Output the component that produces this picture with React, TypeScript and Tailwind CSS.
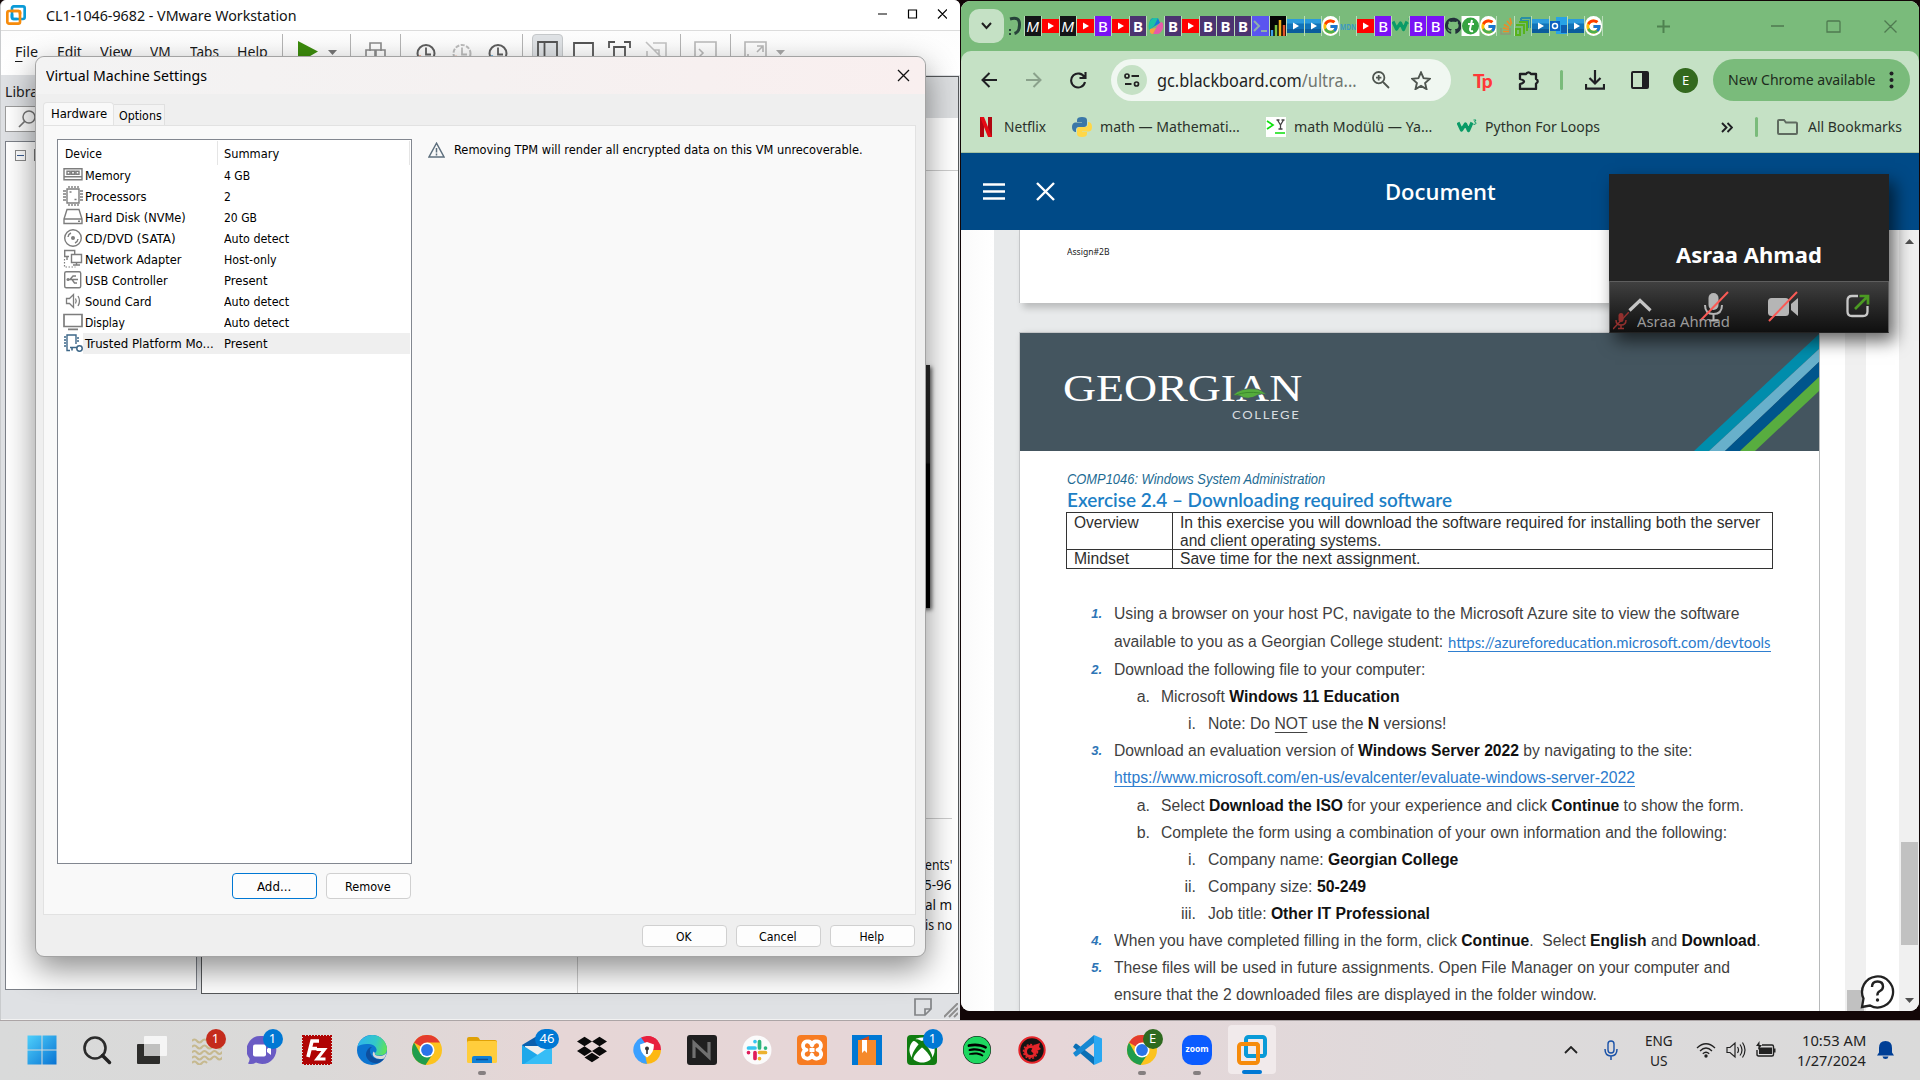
import React, { useLayoutEffect, useRef, useState } from "react";
import { FaDropbox, FaXbox, FaSpotify, FaGithub } from "react-icons/fa";
import { FcGoogle } from "react-icons/fc";
import { SiXampp } from "react-icons/si";

type Kids = { children?: React.ReactNode };

/** Text squeezed horizontally to an exact width. */
function Fit({ w, c = "", children }: { w: number; c?: string } & Kids) {
  const ref = useRef<HTMLSpanElement>(null);
  const [s, setS] = useState(1);
  useLayoutEffect(() => {
    if (ref.current) setS(w / ref.current.offsetWidth);
  }, [w]);
  return (
    <span className={"block shrink-0 " + c} style={{ width: w }}>
      <span ref={ref} className="inline-block origin-left whitespace-pre" style={{ transform: `scaleX(${s})` }}>
        {children}
      </span>
    </span>
  );
}

function Svg({ w, h, vb, c = "", children }: { w: number; h: number; vb?: string; c?: string } & Kids) {
  return (
    <svg width={w} height={h} viewBox={vb ?? `0 0 ${w} ${h}`} className={"block shrink-0 " + c} fill="none">
      {children}
    </svg>
  );
}

const VmLogo = ({ s, c = "" }: { s: number; c?: string }) => (
  <Svg w={s} h={s} vb="0 0 30 30" c={c}>
    <rect x="9" y="2" width="19" height="19" rx="2.5" stroke="#0a9ad7" strokeWidth="4" />
    <rect x="2" y="9" width="19" height="19" rx="2.5" stroke="#f68b0b" strokeWidth="4" />
    <path d="M9 14v4.500a2.500 2.500 0 0 0 2.500 2.500h5.500" stroke="#0a9ad7" strokeWidth="4" />
    <path d="M7 9h12a2 2 0 0 1 2 2v3" stroke="#f68b0b" strokeWidth="4" />
  </Svg>
);

/* ---------------- VMware window ---------------- */

const Sep = ({ c }: { c: string }) => <span className={"h-9 w-px shrink-0 bg-[#b5b5b5] " + c} />;

const Clock = ({ faded = false, accent }: { faded?: boolean; accent: string }) => (
  <Svg w={20} h={22} c={faded ? "opacity-40" : ""}>
    <circle cx="10" cy="10.500" r="8.500" stroke="#5f5f5f" strokeWidth="2" strokeDasharray={faded ? "4 1.5" : undefined} />
    <path d="M10 4.500v7h5" stroke="#5f5f5f" strokeWidth="1.800" />
    <path d="M0 15l4-3 4 3v6H0z" fill={accent} />
  </Svg>
);

function VmToolbar() {
  return (
    <div className="flex h-[44px] items-start bg-gradient-to-b from-[#fdfdfd] to-white pl-[14px] font-['Noto_Sans'] text-[15px] text-[#1a1a1a]">
      <div className="flex h-[40px] items-center">
        <Fit w={23}><u className="underline-offset-4">F</u>ile</Fit>
        <Fit w={25} c="ml-[19px]">Edit</Fit>
        <Fit w={32} c="ml-[18px]">View</Fit>
        <Fit w={21} c="ml-[18px]">VM</Fit>
        <Fit w={29} c="ml-[19px]">Tabs</Fit>
        <Fit w={31} c="ml-[18px]">Help</Fit>
      </div>
      <div className="flex h-[42px] items-center">
        <Sep c="ml-[14px]" />
        <Svg w={20} h={22} c="ml-[15px]"><path d="M0 0v22L20 10.500z" fill="#3c8c0c" /></Svg>
        <Svg w={9} h={5} c="ml-[10px]"><path d="M0 0h9L4.500 5z" fill="#777" /></Svg>
        <Sep c="ml-[13px]" />
        <Svg w={21} h={20} c="ml-[14px]">
          <path d="M5 9V1h11v8M1 16V8h9v8M11 16V8h9v8M1 16h19" stroke="#8b8b8b" strokeWidth="1.600" />
        </Svg>
        <Sep c="ml-[14px]" />
        <div className="ml-[15px] mt-[4px]"><Clock accent="#e8805a" /></div>
        <div className="ml-4 mt-[4px]"><Clock faded accent="#e8805a" /></div>
        <div className="ml-4 mt-[4px]"><Clock accent="#2e8fd0" /></div>
        <Sep c="ml-[14px]" />
        <div className="ml-[9px] flex h-[36px] w-[31px] justify-center rounded border border-[#c6c9cb] bg-[#e0e3e6] pt-[6px]">
          <Svg w={21} h={20}><path d="M1 1h19v18H1zM7.500 1v18" stroke="#555" strokeWidth="1.800" /></Svg>
        </div>
        <Svg w={21} h={20} c="ml-[10px]"><path d="M1 1h19v14H1z" stroke="#555" strokeWidth="1.800" /></Svg>
        <Svg w={23} h={22} c="ml-[14px]">
          <path d="M1 7V1h6M16 1h6v6M6 22V6h11v16" stroke="#555" strokeWidth="1.800" />
        </Svg>
        <Svg w={22} h={22} c="ml-[14px]"><path d="M1 1l19 19M8 2h13v18M2 10v10M9 9h5v5" stroke="#c4c4c4" strokeWidth="1.600" /></Svg>
        <Sep c="ml-[13px]" />
        <Svg w={23} h={22} c="ml-[13px]"><path d="M1 1h21v20H1zM5 8l4 4-4 4M12 16h6" stroke="#b9b9b9" strokeWidth="1.600" /></Svg>
        <Sep c="ml-[13px]" />
        <Svg w={23} h={22} c="ml-[13px]"><path d="M1 1h21v20H1zM13 5h6v6M19 5l-6 6M4 13v4" stroke="#b9b9b9" strokeWidth="1.600" /></Svg>
        <Svg w={9} h={5} c="ml-[9px]"><path d="M0 0h9L4.500 5z" fill="#aaa" /></Svg>
      </div>
    </div>
  );
}

function VmWindow() {
  return (
    <div className="absolute left-0 top-0 flex h-[1020px] w-[960px] flex-col overflow-hidden rounded-t-md border-l border-[#c9cbcd] bg-[#dfe1e4]">
      <div className="flex h-[31px] shrink-0 items-center border-b border-[#dcdcdc] bg-white pl-[5px]">
        <VmLogo s={20} />
        <Fit w={251} c="ml-[20px] font-['Noto_Sans'] text-[15px] text-[#111]">CL1-1046-9682 - VMware Workstation</Fit>
        <Svg w={69} h={11} c="mb-px ml-[581px]">
          <path d="M0 5h9M30.500 1h8v8h-8zM60 .5l9 9M69 .5l-9 9" stroke="#000" strokeWidth="1.200" />
        </Svg>
      </div>
      <VmToolbar />
      <div className="flex flex-1">
        <div className="flex w-[196px] flex-col pl-1">
          <div className="flex h-[31px] items-center pt-[2px] font-['Noto_Sans'] text-[15px] text-[#222]"><Fit w={46}>Library</Fit></div>
          <div className="flex h-[26px] items-center border border-[#9c9c9c] bg-white pl-3">
            <Svg w={19} h={18}><path d="M1 17l6-6" stroke="#777" strokeWidth="1.700" /><circle cx="11" cy="7" r="6" stroke="#777" strokeWidth="1.500" /></Svg>
          </div>
          <div className="mt-[9px] flex h-[849px] gap-2 border border-[#7c8088] bg-white pl-[9px] pt-2">
            <Svg w={11} h={11}><rect x=".5" y=".5" width="10" height="10" stroke="#8a8a8a" /><path d="M2 5.500h7" stroke="#3a5d92" /></Svg>
            <Svg w={14} h={12} c="-mt-px"><rect x=".5" y=".5" width="13" height="11" stroke="#777" /></Svg>
          </div>
        </div>
        <div className="ml-1 mr-[1px] mt-px flex h-[918px] flex-1 flex-col border border-[#55585a] bg-white">
          <div className="h-[41px] bg-[#dcdee0]" />
          <div className="h-[53px] border-b border-[#ccc]" />
          <div className="flex h-[647px] justify-end pr-[28px] pt-[194px]">
            <div className="h-[243px] w-[200px] bg-[linear-gradient(#2a2a2a,#1c1c1c_40%,#000_41%)] shadow-[2px_2px_4px_rgba(0,0,0,0.6)]" />
          </div>
          <div className="flex flex-1">
            <div className="w-[376px] border-r border-[#ccc]" />
            <div className="mr-[6px] flex flex-1 flex-col items-end overflow-hidden border-t border-[#ccc] pt-[36px] font-['Noto_Sans'] text-[14px] leading-5 text-[#111]">
              <Fit w={27}>ents'</Fit>
              <Fit w={28}>5-96</Fit>
              <Fit w={27}>al m</Fit>
              <Fit w={27}>is no</Fit>
            </div>
          </div>
        </div>
      </div>
      <div className="flex h-[26px] shrink-0 items-center justify-end gap-3 border-b border-[#f2f2f2] pr-[2px]">
        <Svg w={18} h={18}><path d="M1 1h16v10l-6 6H1zM11 17v-6h6" stroke="#828487" strokeWidth="1.700" /></Svg>
        <Svg w={14} h={15} c="mt-2"><path d="M0 14L14 0M5 14l9-9M10 14l4-4" stroke="#8e8e8e" strokeWidth="2" /></Svg>
      </div>
    </div>
  );
}

const G = "#7d7d7d";
const deviceIcons: Record<string, React.ReactNode> = {
  mem: <path d="M1 3.700h18v11H1zM4 6.200h3v3H4zM8.500 6.200h3v3h-3zM13 6.200h3v3h-3zM1 11.700h18" stroke={G} strokeWidth="1.400" />,
  cpu: <path d="M4 3h12v14H4zM6 0v2M9 0v2M12 0v2M15 0v2M6 18v2M9 18v2M12 18v2M15 18v2M0 5h3M0 8h3M0 11h3M0 14h3M17 5h3M17 8h3M17 11h3M17 14h3M6.500 6h2M11.500 13.500h2" stroke={G} strokeWidth="1.400" />,
  hdd: <path d="M1 12L4 2.500h12l3 9.500v4.500H1zM1 12h18M15 14.300h2" stroke={G} strokeWidth="1.400" />,
  cd: <><circle cx="10" cy="10" r="8.300" stroke={G} strokeWidth="1.400" /><circle cx="10" cy="10" r="2" fill={G} /><path d="M5 9a5 5 0 0 1 3-4M15 11a5 5 0 0 1-3 4" stroke={G} strokeWidth="1.400" /></>,
  net: <><path d="M6 7.500H1.700v-6h10v4M4 8v3M8.500 5.500h10v8h-10zM13.500 13v3M10 16h7" stroke={G} strokeWidth="1.400" /><path d="M1.500 10v8h11" stroke={G} strokeWidth="1.200" strokeDasharray="1.500 1.500" /></>,
  usb: <><rect x="1.700" y="1.700" width="16" height="16" rx="1.500" stroke={G} strokeWidth="1.400" /><path d="M5 9.500h10M7 9.500l3-3.500h3M9 9.500l2.500 3.500H14" stroke={G} strokeWidth="1.400" /><circle cx="5" cy="9.500" r="1.500" fill={G} /></>,
  snd: <path d="M3.500 7.500h3l4-4v13l-4-4h-3zM12.500 7.500q1.500 2.500 0 5M15 5q3 5 0 10" stroke={G} strokeWidth="1.300" />,
  dsp: <path d="M1 2.500h18v12H1zM5 17.300h10" stroke={G} strokeWidth="1.700" />,
  tpm: <><path d="M7 17.500H4V2h9v9M1 4h2M1 7h2M1 10h2M1 13h2M14 5h2M14 8h2" stroke="#3d6788" strokeWidth="1.400" /><path d="M7 14.500h7M9 15v2.500" stroke="#3d6788" strokeWidth="1.600" /><circle cx="16.500" cy="15.500" r="2.700" stroke="#3d6788" strokeWidth="1.500" /></>,
};

const devices: [string, string, number, string, number][] = [
  ["mem", "Memory", 46, "4 GB", 26],
  ["cpu", "Processors", 62, "2", 7],
  ["hdd", "Hard Disk (NVMe)", 101, "20 GB", 33],
  ["cd", "CD/DVD (SATA)", 91, "Auto detect", 65],
  ["net", "Network Adapter", 96, "Host-only", 53],
  ["usb", "USB Controller", 83, "Present", 43],
  ["snd", "Sound Card", 67, "Auto detect", 65],
  ["dsp", "Display", 40, "Auto detect", 65],
  ["tpm", "Trusted Platform Mo...", 129, "Present", 43],
];

const Btn = ({ w, c = "", children }: { w: number; c?: string } & Kids) => (
  <div className={"flex w-[85px] items-center justify-center rounded border bg-[#fdfdfd] pr-px pt-px " + c}><Fit w={w}>{children}</Fit></div>
);

function Settings() {
  return (
    <div className="absolute left-[35px] top-[56px] flex h-[901px] w-[891px] flex-col rounded-[9px] border border-[#a3a3a3] bg-[#efefef] font-['DejaVu_Sans_Condensed','DejaVu_Sans'] text-[12px] text-black shadow-[0_12px_32px_rgba(0,0,0,0.45)]">
      <div className="flex h-[37px] items-center justify-between rounded-t-[9px] bg-gradient-to-r from-[#f3f3f3] via-[#f5f1f1] to-[#f9efef] pl-[10px] pr-[15px] font-['Noto_Sans'] text-[15px]">
        <Fit w={161}>Virtual Machine Settings</Fit>
        <Svg w={13} h={13}><path d="M1 1l11 11M12 1L1 12" stroke="#111" strokeWidth="1.300" /></Svg>
      </div>
      <div className="flex h-[31px] items-end pl-[7px]">
        <div className="flex h-[23px] w-[71px] items-center rounded-t-sm border border-b-0 border-[#e3e3e3] bg-[#f9f9f9] pl-[7px]"><Fit w={56}>Hardware</Fit></div>
        <div className="flex h-[21px] w-[51px] items-center border border-b-0 border-l-0 border-[#e0e0e0] bg-[#f3f3f3] pl-[5px] pt-[2px]"><Fit w={43}>Options</Fit></div>
      </div>
      <div className="ml-[7px] flex h-[790px] w-[873px] border border-[#e2e2e2] bg-[#f9f9f9]">
        <div className="ml-[13px] mt-[13px] w-[355px]">
          <div className="h-[725px] border border-[#828790] bg-white">
            <div className="flex h-[25px] items-end">
              <div className="flex h-[24px] w-[160px] items-center border-r border-[#e5e5e5] pl-[7px] pt-[2px]"><Fit w={37}>Device</Fit></div>
              <div className="flex h-[24px] w-[192px] items-center border-r border-[#e5e5e5] pl-[6px] pt-[2px]"><Fit w={55}>Summary</Fit></div>
            </div>
            {devices.map(([k, n, w, s, sw]) => (
              <div key={n} className="flex h-[21px] pl-[5px]">
                <Svg w={20} h={20}>{deviceIcons[k]}</Svg>
                <div className={"flex h-[21px] w-[327px] items-center pl-[2px] " + (k === "tpm" ? "bg-[#efefef]" : "")}>
                  <div className="w-[139px]"><Fit w={w}>{n}</Fit></div>
                  <Fit w={sw}>{s}</Fit>
                </div>
              </div>
            ))}
          </div>
          <div className="mt-[9px] flex justify-end gap-[9px] pr-px">
            <Btn w={34} c="h-[26px] border-[#0078d4]">Add...</Btn>
            <Btn w={46} c="h-[26px] border-[#d0d0d0]">Remove</Btn>
          </div>
        </div>
        <div className="ml-[16px] mt-[14px] flex h-[20px] items-center gap-[9px]">
          <Svg w={17} h={16}><path d="M8.500 1.200L16 15H1z" stroke="#5d6f7d" strokeWidth="1.400" /><path d="M8.500 6v4.500M8.500 11.500v2" stroke="#5d6f7d" strokeWidth="1.500" /></Svg>
          <Fit w={409}>Removing TPM will render all encrypted data on this VM unrecoverable.</Fit>
        </div>
      </div>
      <div className="mr-[10px] mt-[10px] flex justify-end gap-[9px]">
        <Btn w={16} c="h-[22px] border-[#d0d0d0]">OK</Btn>
        <Btn w={38} c="h-[22px] border-[#d0d0d0]">Cancel</Btn>
        <Btn w={25} c="h-[22px] border-[#d0d0d0]">Help</Btn>
      </div>
    </div>
  );
}

/* ---------------- Chrome window ---------------- */

const YT = () => <Svg w={17} h={20}><rect y="3" width="17" height="14" fill="#f00" /><path d="M6 6.500v7l6-3.500z" fill="#fff" /></Svg>;
const BBox = ({ c }: { c: string }) => <span className={"flex h-5 w-[17px] items-center justify-center font-['Noto_Sans'] text-[15px] leading-none text-white " + c}>B</span>;
const BP = () => <BBox c="bg-[#7a12f5] font-medium" />;
const BD = () => <BBox c="bg-[#4b3370] font-bold" />;
const MM = () => <span className="flex h-5 w-[17px] items-center justify-center bg-[#131417] font-['Liberation_Sans'] text-[15px] italic leading-none text-white">M</span>;
const ST = () => (
  <Svg w={17} h={20}>
    <rect y="3" width="17" height="14" fill="#1173b8" /><rect y="3" width="17" height="4.500" fill="#2b9bdc" /><rect y="13" width="17" height="4" fill="#0b5c9c" />
    <path d="M6 6.500v7l6-3.500z" fill="#fff" />
  </Svg>
);
const GG = () => <span className="flex h-5 w-[17px] items-center justify-center rounded-full bg-white"><FcGoogle size={17} /></span>;
const W3 = () => <Svg w={20} h={20}><path d="M1 5.500l3.500 7.500 4-6 3 6.500 3.500-8" stroke="#0a9b67" strokeWidth="3.200" strokeLinejoin="round" /><path d="M16.500 3h2.500l-1.500 2q1.500 0 1.500 1.200T16.500 7.500" stroke="#0a9b67" strokeWidth="1" /></Svg>;

const favicons: React.ReactNode[] = [
  <Svg w={17} h={20}><path d="M3 3q10-3 9.500 6 0 7-5 8.500" stroke="#27433a" strokeWidth="3" /><path d="M3 13v6" stroke="#27433a" strokeWidth="2" strokeDasharray="2 2" /></Svg>,
  <MM />, <YT />, <MM />, <YT />, <BP />, <YT />, <BD />,
  <Svg w={17} h={20}><path d="M3 13Q1 3 6 2h5l2 5" fill="#1877d8" /><path d="M6 2h5l-4 8-5 4Q0 6 6 2" fill="#1ec0a5" /><path d="M14 6q3 0 2 6-2 6-6 6H6l4-8z" fill="#e85aa8" /><path d="M6 18q-4 0-3-5l6-1z" fill="#f9a13d" /></Svg>,
  <BD />, <YT />, <BD />, <BD />, <BD />,
  <Svg w={17} h={20}><rect width="17" height="20" fill="#5a55f0" /><path d="M2 5l5 5-5 5M9 15h6" stroke="#8fb0a8" strokeWidth="2" /></Svg>,
  <Svg w={17} h={20}><rect width="17" height="20" fill="#050505" /><path d="M2 14v6" stroke="#3aa0e8" strokeWidth="2.500" /><path d="M6 9v11" stroke="#7bc143" strokeWidth="2.500" /><path d="M10 4v16" stroke="#f2b21c" strokeWidth="2.500" /><path d="M14 9v11" stroke="#e2542c" strokeWidth="2.500" /></Svg>,
  <ST />, <ST />, <GG />,
  <Fit w={16} c="text-[9px] font-bold leading-none text-[#3d9ac2]">MDN</Fit>,
  <YT />, <BP />, <W3 />, <BP />, <BP />,
  <FaGithub size={18} color="#22303a" />,
  <Svg w={17} h={20}><rect width="17" height="20" fill="#fff" /><circle cx="8.500" cy="10" r="8.500" fill="#35a440" /><path d="M10 4l-2 9q0 3 3 2M6 8h6" stroke="#fff" strokeWidth="2" /></Svg>,
  <GG />,
  <Svg w={17} h={20}><path d="M4 12v6h9v-6" stroke="#8f9a7a" strokeWidth="1.500" /><path d="M6 15.500h6M6 12l6 1.500M7 8.500l5 3M10 5l4 4.500M13 2l1.500 6" stroke="#f08a24" strokeWidth="1.600" /></Svg>,
  <Svg w={17} h={20}><path d="M6 2h10v10M6 2v3h7v7" stroke="#2a8fa5" strokeWidth="2" /><path d="M1 9h8v9M4 6h8v9M1 13h4v6H1z" stroke="#57b31c" strokeWidth="2" /></Svg>,
  <ST />,
  <Svg w={17} h={20}><rect x="6" y="1" width="11" height="17" fill="#28a3e6" /><rect x="11" y="9" width="6" height="8" fill="#0f5fb0" /><rect y="5" width="10" height="10" fill="#0c62c2" /><circle cx="5" cy="10" r="2.500" stroke="#fff" strokeWidth="1.500" /></Svg>,
  <ST />, <GG />,
];

function ChromeTop() {
  return (
    <>
      <div className="flex h-[50px] shrink-0 items-center bg-[#7abb7b] pl-2">
        <span className="flex h-[34px] w-[35px] items-center justify-center rounded-[10px] bg-[#c5e1c5]">
          <Svg w={11} h={8}><path d="M1 1l4.500 5L10 1" stroke="#1f1f1f" strokeWidth="2" /></Svg>
        </span>
        <div className="ml-[3px] flex w-[597px]">
          {favicons.map((f, i) => <span key={i} className="flex h-5 w-[17.53px] shrink-0 items-center overflow-hidden border-r border-[#b9dcb9]">{f}</span>)}
        </div>
        <Svg w={13} h={13} c="ml-[53px]"><path d="M6.500 0v13M0 6.500h13" stroke="#4f8250" strokeWidth="2" /></Svg>
        <Svg w={127} h={13} c="ml-[101px]"><path d="M0 6h13M57 1h11q1 0 1 1v10H56V2q0-1 1-1M113.500.5l12 12M125.500.5l-12 12" stroke="#4f7a50" strokeWidth="1.300" /></Svg>
      </div>
      <div className="bg-[#7abb7b]">
        <div className="flex h-[58px] items-center rounded-t-[10px] bg-[#c5e1c5] pl-5 font-['Noto_Sans']">
          <Svg w={16} h={16}><path d="M16 8H2M8.500 1L1.500 8l7 7" stroke="#1f1f23" strokeWidth="2" /></Svg>
          <Svg w={16} h={16} c="ml-[29px]"><path d="M0 8h14M7.500 1l7 7-7 7" stroke="#8aa18b" strokeWidth="2" /></Svg>
          <Svg w={17} h={17} c="ml-[28px]"><path d="M14.500 5.500A7 7 0 1 0 15 10M15.500 0v6h-6" stroke="#1f1f23" strokeWidth="2.100" /></Svg>
          <div className="ml-[24px] flex h-[42px] w-[340px] items-center rounded-full bg-[#f0f7f1] pl-[6px]">
            <span className="flex h-[30px] w-[30px] items-center justify-center rounded-full bg-[#c5e1c5]">
              <Svg w={16} h={14}><circle cx="3" cy="3" r="2" stroke="#222" strokeWidth="1.700" /><circle cx="12.500" cy="11" r="2" stroke="#222" strokeWidth="1.700" /><path d="M7.500 3H15M1 11h6.500" stroke="#222" strokeWidth="1.800" /></Svg>
            </span>
            <Fit w={200} c="ml-[10px] text-[18px] text-[#1f1f1f]">gc.blackboard.com<span className="text-[#6f7570]">/ultra...</span></Fit>
            <Svg w={18} h={18} c="ml-[15px]"><circle cx="6.700" cy="6.700" r="5.700" stroke="#4f5650" strokeWidth="1.800" /><path d="M11 11l6 6M4 6.700h5.400M6.700 4v5.400" stroke="#4f5650" strokeWidth="1.800" /></Svg>
            <Svg w={20} h={19} c="ml-[21px]" vb="1.500 1.500 21 20"><path d="M12 3l2.700 6.100 6.600.6-5 4.400 1.500 6.500-5.800-3.500-5.800 3.500 1.500-6.500-5-4.400 6.600-.6z" stroke="#4f5650" strokeWidth="2" /></Svg>
          </div>
          <span className="ml-[22px] w-[19px] font-['Lato'] text-[19px] font-black leading-none tracking-[-1px] text-[#ff3838]">Tp</span>
          <Svg w={22} h={20} c="ml-[26px]"><path d="M2 4h6.200a2.400 2.400 0 0 1 4.600 0H18v5a2.400 2.400 0 0 1 0 4.600V19H2v-5q4-1 4-2.500T2 9z" stroke="#1f1f23" strokeWidth="2.300" strokeLinejoin="round" /></Svg>
          <span className="ml-[20px] h-5 w-[3px] rounded bg-[#7abb7b]" />
          <Svg w={20} h={20} c="ml-[22px]"><path d="M10 0v13M4.500 8l5.500 5.500L15.500 8M1 14v4.700h18V14" stroke="#1f1f23" strokeWidth="2.200" /></Svg>
          <Svg w={18} h={18} c="ml-[26px]"><rect x="1" y="1" width="16" height="16" rx="1" stroke="#1f1f23" strokeWidth="2" /><path d="M11 1h6v16h-6z" fill="#1f1f23" /></Svg>
          <span className="ml-[24px] flex h-[25px] w-[25px] items-center justify-center rounded-full bg-[#33691e] text-[13px] leading-none text-white">E</span>
          <div className="ml-[15px] flex h-[42px] w-[197px] items-center rounded-full bg-[#7abb7b] pl-[15px] text-[15px] text-[#1d2b1d]">
            <Fit w={148} c="pb-[2px]">New Chrome available</Fit>
            <Svg w={5} h={18} c="ml-[13px]"><circle cx="2.500" cy="2.500" r="2" fill="#1f1f23" /><circle cx="2.500" cy="9" r="2" fill="#1f1f23" /><circle cx="2.500" cy="15.500" r="2" fill="#1f1f23" /></Svg>
          </div>
        </div>
      </div>
      <div className="flex h-[44px] shrink-0 items-start border-b border-[#a5c3a2] bg-[#c5e1c5] pl-[19px] font-['Noto_Sans'] text-[15px] text-[#2a322b]">
        <div className="flex h-9 items-center">
          <Svg w={12} h={20}><path d="M0 0h4v20H0zM8 0h4v20H8z" fill="#b00610" /><path d="M0 0h4l8 20H8z" fill="#e50914" /></Svg>
          <Fit w={42} c="ml-[12px] pb-[2px]">Netflix</Fit>
          <Svg w={20} h={20} c="ml-[26px]">
            <path d="M10 0q5 0 5 3v4q0 3-3 3H7q-3 0-3 3v2H3q-3-1-3-5t3-4.500h7V5H5V3q0-3 5-3" fill="#3b77a8" />
            <path d="M10 20q-5 0-5-3v-4q0-3 3-3h5q3 0 3-3V5h1q3 1 3 5t-3 4.500h-7v.500h5v2q0 3-5 3" fill="#ffd748" />
          </Svg>
          <Fit w={140} c="ml-[8px] pb-[2px]">math — Mathemati...</Fit>
          <Svg w={20} h={20} c="ml-[26px] bg-white"><path d="M1 4l6 4-6 4M9 16h10" stroke="#0be00b" strokeWidth="1.700" /><path d="M10.500 3h3M15.500 3h3M11.500 3l3 5 3-5M14.500 8v4M12.500 12h4" stroke="#444" strokeWidth="1.300" /></Svg>
          <Fit w={138} c="ml-[8px] pb-[2px]">math Modülü — Ya...</Fit>
          <div className="ml-[25px]"><W3 /></div>
          <Fit w={115} c="ml-[8px] pb-[2px]">Python For Loops</Fit>
          <Svg w={12} h={11} c="ml-[121px]"><path d="M1 1l4.500 4.500L1 10M6.500 1L11 5.500 6.500 10" stroke="#1f1f23" strokeWidth="1.900" /></Svg>
          <span className="ml-[22px] h-5 w-[3px] rounded bg-[#7abb7b]" />
          <Svg w={21} h={16} c="ml-[19px]"><path d="M1 2q0-1 1-1h5l2 2.500h10q1 0 1 1V14q0 1-1 1H2q-1 0-1-1z" stroke="#5f6b60" strokeWidth="2" /></Svg>
          <Fit w={94} c="ml-[10px] pb-[2px]">All Bookmarks</Fit>
        </div>
      </div>
    </>
  );
}

const Lnk = ({ children }: Kids) => <span className="border-b border-[#2f7fd0] text-[#2b7bcd]">{children}</span>;

/* [row height class, indent level, marker, text width, content] */
const lines: [string, 0 | 1 | 2, string, number, React.ReactNode][] = [
  ["h-[28px]", 0, "1.", 626, "Using a browser on your host PC, navigate to the Microsoft Azure site to view the software"],
  ["h-[28px]", 0, "", 329, "available to you as a Georgian College student:"],
  ["h-[27px]", 0, "2.", 311, "Download the following file to your computer:"],
  ["h-[27px]", 1, "a.", 239, <>Microsoft <b>Windows 11 Education</b></>],
  ["h-[27px]", 2, "i.", 238, <>Note: Do <span className="border-b border-[#444]">NOT</span> use the <b>N</b> versions!</>],
  ["h-[27px]", 0, "3.", 578, <>Download an evaluation version of <b>Windows Server 2022</b> by navigating to the site:</>],
  ["h-[28px]", 0, "", 521, <Lnk>https://www.microsoft.com/en-us/evalcenter/evaluate-windows-server-2022</Lnk>],
  ["h-[27px]", 1, "a.", 583, <>Select <b>Download the ISO</b> for your experience and click <b>Continue</b> to show the form.</>],
  ["h-[27px]", 1, "b.", 566, "Complete the form using a combination of your own information and the following:"],
  ["h-[27px]", 2, "i.", 250, <>Company name: <b>Georgian College</b></>],
  ["h-[27px]", 2, "ii.", 158, <>Company size: <b>50-249</b></>],
  ["h-[27px]", 2, "iii.", 222, <>Job title: <b>Other IT Professional</b></>],
  ["h-[27px]", 0, "4.", 647, <>When you have completed filling in the form, click <b>Continue</b>.  Select <b>English</b> and <b>Download</b>.</>],
  ["h-[27px]", 0, "5.", 616, "These files will be used in future assignments. Open File Manager on your computer and"],
  ["h-[27px]", 0, "", 483, "ensure that the 2 downloaded files are displayed in the folder window."],
];
const pads = ["w-[94px] pr-[12px]", "w-[141px] pr-[11px]", "w-[188px] pr-[12px]"];

function Document() {
  return (
    <div className="flex w-[826px] shrink-0 justify-start overflow-hidden bg-[#e8eaeb] pl-[25px]">
      <div className="w-[800px] shrink-0">
        <div className="h-[73px] border-l border-[#c4c6c8] bg-white pl-[47px] pt-[15px] font-['Noto_Sans'] text-[9px] text-[#222] shadow-[4px_5px_7px_rgba(0,0,0,0.2)]">
          <Fit w={43}>Assign#2B</Fit>
        </div>
        <div className="mt-[29px] h-[680px] border-l border-t border-[#c4c6c8] bg-white shadow-[4px_3px_7px_rgba(0,0,0,0.25)]">
          <div className="flex h-[118px] justify-between bg-[#44555f]">
            <div className="ml-[43px] mt-[39px] w-[240px] text-[#fff]">
              <div className="relative h-[37px] font-['Liberation_Serif'] text-[37px] leading-[34px]">
                <Fit w={239}>GEORGIAN</Fit>
                <div className="absolute left-[170px] top-[15px]">
                  <Svg w={35} h={12}><path d="M0 8Q8 0 24 2q5 1 10 6-6-2-9 0-10 6-18 1z" fill="#55ad3d" stroke="#44555f" strokeWidth=".8" /><path d="M3 8q10-4 24-2" stroke="#3b8a2c" /></Svg>
                </div>
              </div>
              <div className="flex justify-end pr-[2px] font-['Lato'] text-[11.500px] leading-[12px] tracking-[1.500px] text-[#d9dde0]"><Fit w={69}>COLLEGE</Fit></div>
            </div>
            <Svg w={125} h={118}>
              <path d="M0 118L125 1v15L15 118z" fill="#008dac" /><path d="M15 118L125 16v13L31 118z" fill="#68b0cb" />
              <path d="M31 118L125 29v15L46 118z" fill="#00558c" /><path d="M46 118L125 44v14L61 118z" fill="#58ad3f" />
            </Svg>
          </div>
          <div className="h-[561px] overflow-hidden pt-[17px] font-['Liberation_Sans'] text-[16px] text-[#3f3f3f]">
            <Fit w={258} c="ml-[47px] h-[19px] text-[15px] italic leading-[22px] text-[#1d6b93]">COMP1046: Windows System Administration</Fit>
            <Fit w={385} c="ml-[47px] h-[25px] font-['Lato'] text-[19px] font-semibold leading-[26px] text-[#1d7fc6]">Exercise 2.4 – Downloading required software</Fit>
            <div className="ml-[46px] grid w-[707px] grid-cols-[106px_1fr] border border-[#333] leading-[18px] text-[#2e2e2e]">
              <div className="h-[37px] border-b border-r border-[#333] pl-[7px] pt-px"><Fit w={65}>Overview</Fit></div>
              <div className="h-[37px] border-b border-[#333] pl-[7px] pt-px"><Fit w={580}>In this exercise you will download the software required for installing both the server</Fit><Fit w={201}>and client operating systems.</Fit></div>
              <div className="h-[18px] border-r border-[#333] pl-[7px]"><Fit w={55}>Mindset</Fit></div>
              <div className="h-[18px] pl-[7px]"><Fit w={240}>Save time for the next assignment.</Fit></div>
            </div>
            <div className="mt-[31px] [&_b]:text-[#111]">
              {lines.map(([h, lvl, m, w, t], i) => (
                <div key={i} className={"flex items-center " + h}>
                  <span className={"shrink-0 text-right " + pads[lvl] + (lvl === 0 ? " text-[13px] font-bold italic text-[#2e75b6]" : "")}>{m}</span>
                  <Fit w={w} c="leading-[18px]">{t}</Fit>
                  {i === 1 && <Fit w={323} c="ml-[5px] font-['Lato'] text-[15px] leading-[17px]"><Lnk>https://azureforeducation.microsoft.com/devtools</Lnk></Fit>}
                </div>
              ))}
            </div>
          </div>
        </div>
      </div>
    </div>
  );
}

function ChromeWindow() {
  return (
    <div className="absolute left-[961px] top-px flex h-[1010px] w-[958px] flex-col overflow-hidden rounded-[9px] bg-white">
      <ChromeTop />
      <div className="flex h-[77px] shrink-0 items-center bg-[#004a87] pl-[22px] text-white">
        <Svg w={22} h={17}><path d="M0 1.500h22M0 8.500h22M0 15.500h22" stroke="#fff" strokeWidth="2.400" /></Svg>
        <Svg w={19} h={19} c="ml-[31px]"><path d="M1 1l17 17M18 1L1 18" stroke="#fff" strokeWidth="2.400" /></Svg>
        <Fit w={111} c="ml-[330px] font-['Open_Sans'] text-[22px] font-semibold">Document</Fit>
      </div>
      <div className="flex h-[781px] shrink-0">
        <div className="w-[33px] shrink-0 bg-gradient-to-r from-[#fafafa] to-white" />
        <div className="flex w-[851px] shrink-0"><Document /></div>
      </div>
    </div>
  );
}

function ChromeScrollbars() {
  return (
    <div className="absolute left-[1845px] top-[230px] flex h-[781px] w-[74px] overflow-hidden rounded-br-[9px]">
      <div className="flex w-[21px] flex-col justify-end bg-[#f0f0f0] px-[2px]"><div className="h-[21px] bg-[#c1c1c1]" /></div>
      <div className="w-[33px] bg-white" />
      <div className="flex w-5 flex-col items-center bg-[#f0f0f0]">
        <Svg w={9} h={5} c="mt-[9px]"><path d="M0 5h9L4.500 0z" fill="#505050" /></Svg>
        <div className="mt-[598px] h-[103px] w-[17px] bg-[#c1c1c1]" />
        <Svg w={9} h={5} c="mt-[53px]"><path d="M0 0h9L4.500 5z" fill="#505050" /></Svg>
      </div>
    </div>
  );
}

function HelpBubble() {
  return (
    <div className="absolute left-[1860px] top-[974px]">
      <Svg w={35} h={35}>
        <path d="M2 33l1.500-8.500A15.500 15.500 0 1 1 10 31.500z" fill="#fff" stroke="#222" strokeWidth="2.300" />
        <path d="M12 13q0-5.500 5.500-5.500t5.500 5q0 3-3 4.500t-2.500 4.500" stroke="#222" strokeWidth="2.400" /><circle cx="17.500" cy="26" r="1.700" fill="#222" />
      </Svg>
    </div>
  );
}

function CallWindow() {
  return (
    <div className="absolute left-[1609px] top-[174px] flex h-[159px] w-[280px] flex-col bg-[#232323] font-['Noto_Sans'] shadow-[6px_8px_16px_rgba(0,0,0,0.6)]">
      <div className="flex h-[107px] items-end justify-center pb-[10px] text-[22px] font-bold text-white"><Fit w={146}>Asraa Ahmad</Fit></div>
      <div className="relative flex h-[52px] items-start border border-[#5e5e5e] border-b-[#222] bg-gradient-to-b from-[#404040] to-[#101010] pl-[18px] pt-[9px]">
        <Svg w={24} h={14} c="mt-[7px]"><path d="M1.500 12.500L12 2.500l10.500 10" stroke="#c4c4c4" strokeWidth="3.200" /></Svg>
        <Svg w={30} h={32} c="ml-[47px]">
          <rect x="9.500" y="2" width="10" height="17" rx="5" fill="#b5b5b5" /><path d="M6 14q0 9 8.500 9t8.500-9M14.500 23v6M10 29.500h9" stroke="#b5b5b5" strokeWidth="2" /><path d="M1 30L29 1" stroke="#fa5a55" strokeWidth="2" />
        </Svg>
        <Svg w={31} h={32} c="ml-[39px]"><rect x="0" y="7" width="21" height="18" rx="3.500" fill="#b5b5b5" /><path d="M23 13l7-6v18l-7-6z" fill="#b5b5b5" /><path d="M1 30L29 1" stroke="#fa5a55" strokeWidth="2" /></Svg>
        <Svg w={24} h={24} c="ml-[47px] mt-[3px]"><path d="M12 2H6Q1.500 2 1.500 6.500v11Q1.500 22 6 22h11q4.500 0 4.500-4.500V12" stroke="#c8c8c8" strokeWidth="2.300" /><path d="M9 15L21 3M13.500 2H22v8.500" stroke="#4b9a22" strokeWidth="2.700" /></Svg>
        <div className="absolute left-[3px] top-[28px] flex h-[22px] items-center gap-[8px] text-[15px] text-[#9a9a9a]">
          <Svg w={16} h={18}><rect x="5.500" y="1" width="5" height="9" rx="2.500" fill="#93302e" /><path d="M3 8q0 5 5 5t5-5M8 13v4M5 16.500h6M0 17L16 0" stroke="#93302e" strokeWidth="1.500" /></Svg>
          <Fit w={93}>Asraa Ahmad</Fit>
        </div>
      </div>
    </div>
  );
}

/* ---------------- Taskbar ---------------- */

const ChromeIcon = () => (
  <Svg w={30} h={30}>
    <circle cx="15" cy="15" r="15" fill="#fcc31e" />
    <path d="M15 15L2 7.500A15 15 0 0 1 28 7.500H15z" fill="#e43b2e" /><path d="M2 7.500a15 15 0 0 0 11.500 22.400L21 18.500 8.500 19z" fill="#1f9d4c" />
    <circle cx="15" cy="15" r="7.500" fill="#fff" /><circle cx="15" cy="15" r="5.900" fill="#2a74e8" />
  </Svg>
);
const Badge = ({ c, children }: { c: string } & Kids) => (
  <span className={"absolute top-[-6px] flex h-5 min-w-5 items-center justify-center rounded-full px-[5px] font-['Noto_Sans'] text-[13px] leading-none text-white " + c}>{children}</span>
);

const apps: React.ReactNode[] = [
  <Svg w={30} h={30}><defs><linearGradient id="wn" x1="0" y1="0" x2="1" y2="1"><stop stopColor="#4fd0fb" /><stop offset="1" stopColor="#0873d3" /></linearGradient></defs><path d="M.500.500h14v14H.500zM15.500.500h14v14h-14zM.500 15.500h14v14H.500zM15.500 15.500h14v14h-14z" fill="url(#wn)" /></Svg>,
  <Svg w={30} h={30}><circle cx="13" cy="13" r="10.500" stroke="#2b2b2b" strokeWidth="2.600" /><path d="M20.500 20.500l7 7" stroke="#222" strokeWidth="3.500" strokeLinecap="round" /></Svg>,
  <Svg w={30} h={30}><rect x="0" y="9" width="23" height="20" rx="1" fill="#2d2d2b" /><rect x="7" y="1" width="23" height="20" rx="1" fill="#f5f5f5" /><rect x="7" y="9" width="16" height="12" fill="#c0c0bf" /></Svg>,
  <>
    <Svg w={30} h={30}>{[6, 12, 17.500, 23, 28].map((y, i) => <path key={y} d={`M0 ${y}q2.500-3 5 0t5 0 5 0${i > 0 && i < 4 ? " 5 0 5 0 5 0 5 0" : ""}`} stroke="#c6b98f" strokeWidth="2" />)}</Svg>
    <Badge c="left-[14px] bg-[#c42b1c]">1</Badge>
  </>,
  <>
    <Svg w={30} h={30}><path d="M15 1a14 14 0 1 1-6 26.500Q5 30 1 28.500q2-3 1.500-5A14 14 0 0 1 15 1" fill="#6a5bc4" /><rect x="6" y="9.500" width="13" height="12" rx="2" fill="#fff" /><path d="M20 14l4-3v9l-4-3z" fill="#fff" /></Svg>
    <Badge c="left-[16px] bg-[#0078d4]">1</Badge>
  </>,
  <Svg w={30} h={30}><rect x="1" y="1" width="28" height="28" fill="#b00404" stroke="#b00404" strokeWidth="2" strokeDasharray="2 1" /><path d="M17 6H10L6 22M8.500 13.500H15" stroke="#fff" strokeWidth="3.600" /><path d="M14.500 14.500h8L15 24h8.500" stroke="#fff" strokeWidth="3" /></Svg>,
  <Svg w={30} h={30}>
    <defs><linearGradient id="ed" x1="0" y1="0.300" x2="1" y2=".5"><stop stopColor="#2fb4ee" /><stop offset=".6" stopColor="#33c8c8" /><stop offset="1" stopColor="#5de35a" /></linearGradient></defs>
    <circle cx="15" cy="15" r="15" fill="#0c74d0" />
    <path d="M.5 11.500A15 15 0 0 1 30 13.500q.2 6.500-7 7-5.500 0-5-2.500 2-1.500 1.500-4Q18 9.500 12 9 4 8.500.5 11.500" fill="url(#ed)" />
    <path d="M11 14q-5 7 2 12.500 8 4.500 14.500-3-7 2.500-11-1T13 15q0-2 2-3-2-.5-4 2" fill="#0e4f9e" />
    <path d="M17.800 18q-.6 3 5.200 3 4.500-.3 6.500-3.500-.5 3.500-2.500 6-6.500 1.500-10-1.500-2.500-3-.2-5.500z" fill="#dcd8d7" />
  </Svg>,
  <ChromeIcon />,
  <Svg w={30} h={30}><path d="M0 4q0-2 2-2h8q2 0 3 3h15q2 0 2 2v4H0z" fill="#e0a106" /><rect y="6" width="30" height="22" rx="1.500" fill="#ffcd3c" /><path d="M5 28v-5q0-2 2-2h16q2 0 2 2v5z" fill="#1081d6" /><path d="M9 24.500h12" stroke="#0a4f95" strokeWidth="1.500" /></Svg>,
  <>
    <Svg w={30} h={30}><path d="M0 10L15 1l15 9v19H0z" fill="#0a5fae" /><path d="M3 11h24v5L15 22 3 16z" fill="#efefef" /><path d="M0 10l30 19H0z" fill="#1fa8ea" /><path d="M30 10v19H2z" fill="#37bdf6" /></Svg>
    <Badge c="left-[13px] bg-[#0078d4]">46</Badge>
  </>,
  <FaDropbox size={31} color="#0a0a0a" />,
  <Svg w={28} h={28}><path d="M14 0A14 14 0 0 1 28 14l-9 1L8 4z" fill="#e8203e" /><path d="M28 14A14 14 0 0 1 8 26.500L14 14z" fill="#fdb813" /><path d="M14 28A14 14 0 0 1 8 1.500l4 3v14z" fill="#3aa0ff" /><path d="M8 1.500Q11 0 14 0q7 0 11 5l-8 1-5 1z" fill="#e8203e" /><path d="M14 6l7 2.500q0 9-7 13-7-4-7-13z" fill="#fff" /><circle cx="14" cy="12.500" r="2" fill="#333" /><path d="M14 13v5" stroke="#333" strokeWidth="1.600" /></Svg>,
  <Svg w={30} h={30}><rect width="30" height="30" rx="3" fill="#1f1f1f" /><path d="M7 23V8l15 14V7" stroke="#707070" strokeWidth="3.200" /></Svg>,
  <Svg w={30} h={30}><circle cx="15" cy="15" r="14.500" fill="#fbfbfb" /><g strokeWidth="3.700" strokeLinecap="round"><path d="M13 6.500v.1M6.500 13H13" stroke="#36c5f0" /><path d="M17.500 6.500V13M23.500 13v.1" stroke="#2eb67d" /><path d="M17.500 23.500v.1M17.500 17.500h6" stroke="#ecb22e" /><path d="M13 17.500v6M6.500 17.500v.1" stroke="#e01e5a" /></g></Svg>,
  <span className="flex h-[30px] w-[30px] items-center justify-center rounded bg-[#f77c22]"><SiXampp size={25} color="#f77c22" className="hidden" />
    <Svg w={24} h={24}><path d="M8 3.500a4.200 4.200 0 1 0-1.500 8.300A4.200 4.200 0 1 0 8 20.500q3 0 4-4 1 4 4 4a4.200 4.200 0 1 0 1.500-8.700A4.200 4.200 0 1 0 16 3.500q-3 0-4 4-1-4-4-4zM9.500 12h5" stroke="#fff" strokeWidth="3.800" strokeLinejoin="round" /></Svg>
  </span>,
  <Svg w={30} h={30}><rect width="30" height="30" fill="#0078d4" /><path d="M6 6L17 1v5z" fill="#cf4a1b" /><rect x="6" y="5" width="18" height="25" fill="#f5892b" /><path d="M10 5h5v13l-2.500-2.500L10 18z" fill="#fff" /></Svg>,
  <>
    <span className="flex h-[30px] w-[30px] items-center justify-center rounded bg-[#107c10]"><FaXbox size={26} color="#fff" /></span>
    <Badge c="left-[16px] bg-[#0078d4]">1</Badge>
  </>,
  <span className="rounded-full bg-black"><FaSpotify size={28} color="#1ed760" /></span>,
  <Svg w={28} h={28}><circle cx="14" cy="14" r="12.700" fill="#141414" stroke="#e5252a" strokeWidth="2" /><circle cx="12.500" cy="15.500" r="5" stroke="#e5252a" strokeWidth="3" /><circle cx="12.500" cy="15.500" r="7" stroke="#e5252a" strokeWidth="1.500" strokeDasharray="2 1.600" /><path d="M13 15l3-6 6-2-1 4 2 2-4 2-2 4z" fill="#e5252a" /></Svg>,
  <Svg w={30} h={30}><path d="M22 0v30L1 12l2-3q1-1 2 0l17 13z" fill="#0a6fb5" /><path d="M22 0L1 18l2 3q1 1 2 0L22 8z" fill="#1688d2" /><path d="M22 0l8 3.500v23L22 30z" fill="#2aa8f2" /></Svg>,
  <><ChromeIcon /><Badge c="left-[16px] bg-[#2f6a20]">E</Badge></>,
  <Svg w={30} h={30}><rect width="30" height="30" rx="10" fill="#0b5cff" /><text x="15" y="17" textAnchor="middle" fontSize="8.500" fontWeight="bold" fill="#fff" fontFamily="Open Sans, sans-serif">zoom</text></Svg>,
  <VmLogo s={30} />,
];

function Taskbar() {
  return (
    <div className="absolute left-0 top-[1020px] flex h-[60px] w-[1920px] border-t border-[#aca5a6] bg-[linear-gradient(to_right,#d9dada,#dad9d8_300px,#e6d6d6_560px,#e6d6d8_1060px,#dddadb_1500px,#dadada)] pl-[14px]">
      {apps.map((a, i) => (
        <div key={i} className="flex h-[57px] w-[55px] shrink-0 items-center justify-center">
          <div className={"relative flex items-center justify-center " + (i === 22 ? "h-[49px] w-[48px] rounded bg-[#f1eaeb]" : "h-[30px] w-[30px]")}>
            {a}
            {[8, 20, 21].includes(i) && <span className="absolute bottom-[-10px] h-1 w-2 rounded-full bg-[#857f80]" />}
            {i === 22 && <span className="absolute bottom-0 h-1 w-5 rounded-full bg-[#0078d4]" />}
          </div>
        </div>
      ))}
      <div className="ml-[285px] flex h-[57px] items-center font-['Noto_Sans'] text-[14.500px] leading-5 text-[#222]">
        <Svg w={14} h={8}><path d="M1 7l6-6 6 6" stroke="#222" strokeWidth="1.800" /></Svg>
        <Svg w={14} h={20} c="ml-[26px]"><rect x="4" y="1" width="6" height="12" rx="3" stroke="#1a52a8" strokeWidth="1.400" /><path d="M1 9q0 7 6 7t6-7M7 16v4" stroke="#1a52a8" strokeWidth="1.500" /></Svg>
        <div className="ml-[27px] flex w-[28px] flex-col items-center"><Fit w={28}>ENG</Fit><Fit w={18}>US</Fit></div>
        <Svg w={20} h={16} c="ml-[23px]"><path d="M1 6q9-8.500 18 0M4 9q6-6 12 0M6.800 11.800q3.200-3 6.400 0" stroke="#222" strokeWidth="1.300" /><circle cx="10" cy="14" r="1.700" fill="#222" /></Svg>
        <Svg w={20} h={18} c="ml-[10px]"><path d="M1 6.500h3l5-4.500v14l-5-4.500H1zM11.500 6q2 3 0 6M14 3.500q4 5.500 0 11M16.500 1.500q5 7.500 0 15" stroke="#222" strokeWidth="1.200" /></Svg>
        <Svg w={20} h={17} c="ml-[10px]"><path d="M6 4h10q1.500 0 1.500 1.500v8q0 1.500-1.500 1.500H2.500Q1 15 1 13.500V9" stroke="#222" strokeWidth="1.400" /><rect x="3" y="6.500" width="13" height="6.500" fill="#222" /><path d="M18.500 7.500v4" stroke="#222" strokeWidth="2" /><path d="M3.500 0L0 5h2.500L2 9l4-5H3.500z" fill="#222" /></Svg>
        <div className="ml-[21px] flex w-[69px] flex-col items-end"><Fit w={64}>10:53 AM</Fit><Fit w={69}>1/27/2024</Fit></div>
        <Svg w={17} h={19} c="ml-[11px]"><path d="M0 15.500l2-3V8q0-7 6.500-7T15 8v4.500l2 3zM5.500 16.500h6Q11 19 8.500 19t-3-2.500" fill="#003f96" /></Svg>
      </div>
    </div>
  );
}

export default function App() {
  return (
    <div className="relative h-[1080px] w-[1920px] overflow-hidden bg-[#120607]">
      <VmWindow />
      <Settings />
      <ChromeWindow />
      <ChromeScrollbars />
      <HelpBubble />
      <CallWindow />
      <Taskbar />
    </div>
  );
}
